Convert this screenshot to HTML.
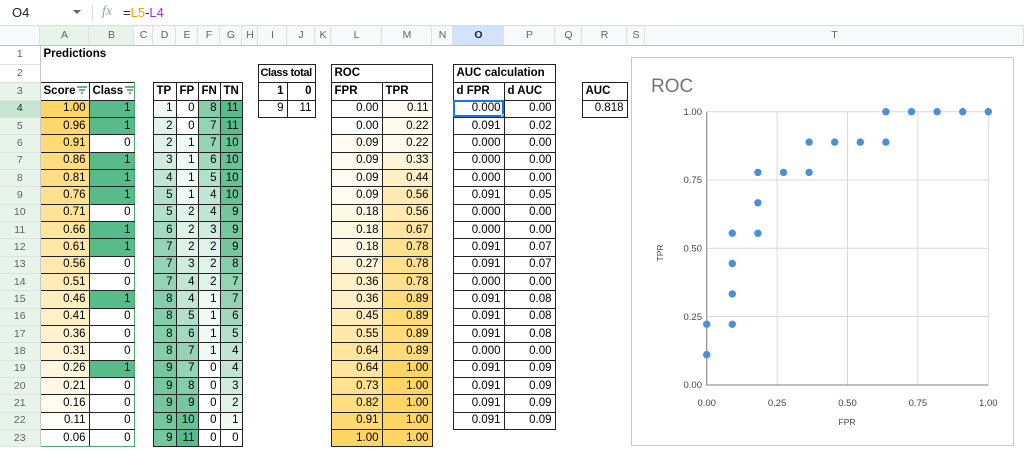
<!DOCTYPE html>
<html><head><meta charset="utf-8">
<style>
*{box-sizing:border-box}
body{margin:0;width:1024px;height:451px;overflow:hidden;background:#fff;font-family:"Liberation Sans",Arial,sans-serif;position:relative}
#bar{position:absolute;left:0;top:0;width:1024px;height:26px;border-bottom:1px solid #dadce0;font-size:13px;color:#202124}
table{position:absolute;left:0;top:26px;width:1024px;border-collapse:collapse;table-layout:fixed;font-size:11.5px;color:#000}
td,th{padding:0 3px;white-space:nowrap;overflow:hidden;height:17.35px;line-height:15px}
th{font-weight:normal;color:#5f6368;font-size:10.5px;text-align:center;padding:0}
thead th{background:#f8f9fa;height:19px;border-bottom:1px solid #c0c0c0;box-shadow:inset -1px 0 #e0e0e0}
tbody th{background:#fff;border-right:1px solid #c8c8c8;border-bottom:1px solid #e0e0e0}
tbody th.gr{background:#e6f4ea}
td.d{border:1px solid #222;text-align:right}
.r{text-align:right}.b{font-weight:bold}
.g0{background:#fff}.g1{background:#f0f9f4}.g2{background:#e0f3ea}.g3{background:#d1ecdf}.g4{background:#c2e6d4}.g5{background:#b3e0ca}.g6{background:#a3dabf}.g7{background:#94d4b5}.g8{background:#85ceaa}.g9{background:#76c79f}.g10{background:#66c195}.g11{background:#57bb8a}
td.fb{border-right:1px solid #4ea86e}
tr.last td.fa,tr.last td.fb{border-bottom:1px solid #4ea86e}
.fi{display:inline-block;vertical-align:middle;margin-left:2px}
</style></head><body>
<div id="bar">
<span style="position:absolute;left:12px;top:5px">O4</span>
<span style="position:absolute;left:73px;top:10px;width:0;height:0;border-left:4px solid transparent;border-right:4px solid transparent;border-top:4px solid #5f6368"></span>
<span style="position:absolute;left:92px;top:5px;width:1px;height:16px;background:#dadce0"></span>
<span style="position:absolute;left:102px;top:4px;font-style:italic;color:#9aa0a6;font-family:'Liberation Serif',serif;font-size:14px">fx</span>
<span style="position:absolute;left:123px;top:5px">=<span style="color:#e8a317">L5</span>-<span style="color:#9334e6">L4</span></span>
</div>
<table>
<colgroup><col style="width:40px"><col style="width:49px"><col style="width:45px"><col style="width:19px"><col style="width:23px"><col style="width:22px"><col style="width:22px"><col style="width:22px"><col style="width:16px"><col style="width:29px"><col style="width:28px"><col style="width:16px"><col style="width:51px"><col style="width:50px"><col style="width:21px"><col style="width:51px"><col style="width:51px"><col style="width:27px"><col style="width:45px"><col style="width:18px"><col style="width:379px"></colgroup>
<thead><tr><th></th><th style="background:#e6f4ea">A</th><th style="background:#e6f4ea">B</th><th>C</th><th>D</th><th>E</th><th>F</th><th>G</th><th>H</th><th>I</th><th>J</th><th>K</th><th>L</th><th>M</th><th>N</th><th style="background:#d3e3fd;color:#1f1f1f;font-weight:bold">O</th><th>P</th><th>Q</th><th>R</th><th>S</th><th>T</th></tr></thead>
<tbody>
<tr style="height:19px"><th style="height:19px">1</th><td class="b" colspan="3" style="height:19px">Predictions</td><td colspan="17"></td></tr>
<tr style="height:18px"><th style="height:18px">2</th><td colspan="8" style="height:18px"></td><td class="d b" colspan="2" style="text-align:left;padding-left:2px;font-size:11px;letter-spacing:-0.4px">Class total</td><td></td><td class="d b" colspan="2" style="text-align:left">ROC</td><td></td><td class="d b" colspan="2" style="text-align:left">AUC calculation</td><td colspan="4"></td></tr>
<tr style="height:18px"><th class="gr" style="height:18px">3</th><td class="d b fa" style="text-align:left">Score<svg class="fi" width="10" height="8"><path d="M0 1h10M2 4h6M4 7h2" stroke="#188038" stroke-width="1.2"/></svg></td><td class="d b fb" style="text-align:left">Class<svg class="fi" width="10" height="8"><path d="M0 1h10M2 4h6M4 7h2" stroke="#188038" stroke-width="1.2"/></svg></td><td></td><td class="d b" style="text-align:left">TP</td><td class="d b" style="text-align:left">FP</td><td class="d b" style="text-align:left">FN</td><td class="d b" style="text-align:left">TN</td><td></td><td class="d b">1</td><td class="d b">0</td><td></td><td class="d b" style="text-align:left">FPR</td><td class="d b" style="text-align:left">TPR</td><td></td><td class="d b" style="text-align:left">d FPR</td><td class="d b" style="text-align:left">d AUC</td><td></td><td class="d b" style="text-align:left">AUC</td><td colspan="2"></td></tr>
<tr><th class="gr" style="background:#c6e6d1;color:#202124">4</th><td class="d fa" style="background:#ffd666">1.00</td><td class="d fb g11">1</td><td></td><td class="d g1">1</td><td class="d g0">0</td><td class="d g8">8</td><td class="d g11">11</td><td></td><td class="d">9</td><td class="d">11</td><td></td><td class="d">0.00</td><td class="d" style="background:#fffbf3">0.11</td><td></td><td class="d" style="outline:2px solid #1a73e8;outline-offset:-2px;position:relative">0.000<span style="position:absolute;right:-4px;bottom:-4px;width:7px;height:7px;border-radius:50%;background:#1a73e8;border:1px solid #fff"></span></td><td class="d">0.00</td><td></td><td class="d">0.818</td><td colspan="2"></td></tr>
<tr><th class="gr">5</th><td class="d fa" style="background:#ffd86d">0.96</td><td class="d fb g11">1</td><td></td><td class="d g2">2</td><td class="d g0">0</td><td class="d g7">7</td><td class="d g11">11</td><td colspan="4"></td><td class="d">0.00</td><td class="d" style="background:#fffaec">0.22</td><td></td><td class="d">0.091</td><td class="d">0.02</td><td colspan="4"></td></tr>
<tr><th class="gr">6</th><td class="d fa" style="background:#ffda75">0.91</td><td class="d fb">0</td><td></td><td class="d g2">2</td><td class="d g1">1</td><td class="d g7">7</td><td class="d g10">10</td><td colspan="4"></td><td class="d" style="background:#fffbf1">0.09</td><td class="d" style="background:#fffaec">0.22</td><td></td><td class="d">0.000</td><td class="d">0.00</td><td colspan="4"></td></tr>
<tr><th class="gr">7</th><td class="d fa" style="background:#ffdc7d">0.86</td><td class="d fb g11">1</td><td></td><td class="d g3">3</td><td class="d g1">1</td><td class="d g6">6</td><td class="d g10">10</td><td colspan="4"></td><td class="d" style="background:#fffbf1">0.09</td><td class="d" style="background:#fff5d9">0.33</td><td></td><td class="d">0.000</td><td class="d">0.00</td><td colspan="4"></td></tr>
<tr><th class="gr">8</th><td class="d fa" style="background:#ffde85">0.81</td><td class="d fb g11">1</td><td></td><td class="d g4">4</td><td class="d g1">1</td><td class="d g5">5</td><td class="d g10">10</td><td colspan="4"></td><td class="d" style="background:#fffbf1">0.09</td><td class="d" style="background:#fff0c6">0.44</td><td></td><td class="d">0.000</td><td class="d">0.00</td><td colspan="4"></td></tr>
<tr><th class="gr">9</th><td class="d fa" style="background:#ffe08d">0.76</td><td class="d fb g11">1</td><td></td><td class="d g5">5</td><td class="d g1">1</td><td class="d g4">4</td><td class="d g10">10</td><td colspan="4"></td><td class="d" style="background:#fffbf1">0.09</td><td class="d" style="background:#ffeab2">0.56</td><td></td><td class="d">0.091</td><td class="d">0.05</td><td colspan="4"></td></tr>
<tr><th class="gr">10</th><td class="d fa" style="background:#ffe395">0.71</td><td class="d fb">0</td><td></td><td class="d g5">5</td><td class="d g2">2</td><td class="d g4">4</td><td class="d g9">9</td><td colspan="4"></td><td class="d" style="background:#fff8e3">0.18</td><td class="d" style="background:#ffeab2">0.56</td><td></td><td class="d">0.000</td><td class="d">0.00</td><td colspan="4"></td></tr>
<tr><th class="gr">11</th><td class="d fa" style="background:#ffe59d">0.66</td><td class="d fb g11">1</td><td></td><td class="d g6">6</td><td class="d g2">2</td><td class="d g3">3</td><td class="d g9">9</td><td colspan="4"></td><td class="d" style="background:#fff8e3">0.18</td><td class="d" style="background:#ffe59f">0.67</td><td></td><td class="d">0.000</td><td class="d">0.00</td><td colspan="4"></td></tr>
<tr><th class="gr">12</th><td class="d fa" style="background:#ffe7a5">0.61</td><td class="d fb g11">1</td><td></td><td class="d g7">7</td><td class="d g2">2</td><td class="d g2">2</td><td class="d g9">9</td><td colspan="4"></td><td class="d" style="background:#fff8e3">0.18</td><td class="d" style="background:#ffe08c">0.78</td><td></td><td class="d">0.091</td><td class="d">0.07</td><td colspan="4"></td></tr>
<tr><th class="gr">13</th><td class="d fa" style="background:#ffe9ae">0.56</td><td class="d fb">0</td><td></td><td class="d g7">7</td><td class="d g3">3</td><td class="d g2">2</td><td class="d g8">8</td><td colspan="4"></td><td class="d" style="background:#fff4d6">0.27</td><td class="d" style="background:#ffe08c">0.78</td><td></td><td class="d">0.091</td><td class="d">0.07</td><td colspan="4"></td></tr>
<tr><th class="gr">14</th><td class="d fa" style="background:#ffebb6">0.51</td><td class="d fb">0</td><td></td><td class="d g7">7</td><td class="d g4">4</td><td class="d g2">2</td><td class="d g7">7</td><td colspan="4"></td><td class="d" style="background:#fff0c8">0.36</td><td class="d" style="background:#ffe08c">0.78</td><td></td><td class="d">0.000</td><td class="d">0.00</td><td colspan="4"></td></tr>
<tr><th class="gr">15</th><td class="d fa" style="background:#ffeebe">0.46</td><td class="d fb g11">1</td><td></td><td class="d g8">8</td><td class="d g4">4</td><td class="d g1">1</td><td class="d g7">7</td><td colspan="4"></td><td class="d" style="background:#fff0c8">0.36</td><td class="d" style="background:#ffdb79">0.89</td><td></td><td class="d">0.091</td><td class="d">0.08</td><td colspan="4"></td></tr>
<tr><th class="gr">16</th><td class="d fa" style="background:#fff0c6">0.41</td><td class="d fb">0</td><td></td><td class="d g8">8</td><td class="d g5">5</td><td class="d g1">1</td><td class="d g6">6</td><td colspan="4"></td><td class="d" style="background:#ffedba">0.45</td><td class="d" style="background:#ffdb79">0.89</td><td></td><td class="d">0.091</td><td class="d">0.08</td><td colspan="4"></td></tr>
<tr><th class="gr">17</th><td class="d fa" style="background:#fff2ce">0.36</td><td class="d fb">0</td><td></td><td class="d g8">8</td><td class="d g6">6</td><td class="d g1">1</td><td class="d g5">5</td><td colspan="4"></td><td class="d" style="background:#ffe8ab">0.55</td><td class="d" style="background:#ffdb79">0.89</td><td></td><td class="d">0.091</td><td class="d">0.08</td><td colspan="4"></td></tr>
<tr><th class="gr">18</th><td class="d fa" style="background:#fff4d6">0.31</td><td class="d fb">0</td><td></td><td class="d g8">8</td><td class="d g7">7</td><td class="d g1">1</td><td class="d g4">4</td><td colspan="4"></td><td class="d" style="background:#ffe59d">0.64</td><td class="d" style="background:#ffdb79">0.89</td><td></td><td class="d">0.000</td><td class="d">0.00</td><td colspan="4"></td></tr>
<tr><th class="gr">19</th><td class="d fa" style="background:#fff6de">0.26</td><td class="d fb g11">1</td><td></td><td class="d g9">9</td><td class="d g7">7</td><td class="d g0">0</td><td class="d g4">4</td><td colspan="4"></td><td class="d" style="background:#ffe59d">0.64</td><td class="d" style="background:#ffd666">1.00</td><td></td><td class="d">0.091</td><td class="d">0.09</td><td colspan="4"></td></tr>
<tr><th class="gr">20</th><td class="d fa" style="background:#fff8e7">0.21</td><td class="d fb">0</td><td></td><td class="d g9">9</td><td class="d g8">8</td><td class="d g0">0</td><td class="d g3">3</td><td colspan="4"></td><td class="d" style="background:#ffe18f">0.73</td><td class="d" style="background:#ffd666">1.00</td><td></td><td class="d">0.091</td><td class="d">0.09</td><td colspan="4"></td></tr>
<tr><th class="gr">21</th><td class="d fa" style="background:#fffbef">0.16</td><td class="d fb">0</td><td></td><td class="d g9">9</td><td class="d g9">9</td><td class="d g0">0</td><td class="d g2">2</td><td colspan="4"></td><td class="d" style="background:#ffdd82">0.82</td><td class="d" style="background:#ffd666">1.00</td><td></td><td class="d">0.091</td><td class="d">0.09</td><td colspan="4"></td></tr>
<tr><th class="gr">22</th><td class="d fa" style="background:#fffdf7">0.11</td><td class="d fb">0</td><td></td><td class="d g9">9</td><td class="d g10">10</td><td class="d g0">0</td><td class="d g1">1</td><td colspan="4"></td><td class="d" style="background:#ffda74">0.91</td><td class="d" style="background:#ffd666">1.00</td><td></td><td class="d">0.091</td><td class="d">0.09</td><td colspan="4"></td></tr>
<tr class="last"><th class="gr">23</th><td class="d fa">0.06</td><td class="d fb">0</td><td></td><td class="d g9">9</td><td class="d g11">11</td><td class="d g0">0</td><td class="d g0">0</td><td colspan="4"></td><td class="d" style="background:#ffd666">1.00</td><td class="d" style="background:#ffd666">1.00</td><td colspan="7"></td></tr>
</tbody></table>
<svg style="position:absolute;left:631px;top:57px" width="383" height="389" font-family="Liberation Sans, Arial, sans-serif">
<rect x="0.5" y="0.5" width="382" height="388" fill="#fff" stroke="#c8c8c8"/>
<text x="20" y="35" font-size="19" fill="#757575">ROC</text>
<g stroke="#d9d9d9" stroke-width="1">
<path d="M146.1 54.7V328M216.5 54.7V328M286.9 54.7V328M357.3 54.7V328M75.7 54.7H357.3M75.7 122.9H357.3M75.7 191.2H357.3M75.7 259.5H357.3"/>
</g>
<path d="M75.7 54.7V328H357.3" stroke="#999" stroke-width="1.3" fill="none"/>
<g font-size="9.5" fill="#444" text-anchor="end">
<text x="71" y="58">1.00</text><text x="71" y="126">0.75</text><text x="71" y="194.5">0.50</text><text x="71" y="263">0.25</text><text x="71" y="331">0.00</text>
</g>
<g font-size="9.5" fill="#444" text-anchor="middle">
<text x="75.7" y="349">0.00</text><text x="146.1" y="349">0.25</text><text x="216.5" y="349">0.50</text><text x="286.9" y="349">0.75</text><text x="357.3" y="349">1.00</text>
<text x="216" y="368" font-size="8.5">FPR</text>
<text transform="translate(32,196) rotate(-90)" font-size="8.5">TPR</text>
</g>
<g fill="#4a90d9">
<circle cx="75.7" cy="297.6" r="3.7"/><circle cx="75.7" cy="267.3" r="3.7"/><circle cx="101.3" cy="267.3" r="3.7"/><circle cx="101.3" cy="236.9" r="3.7"/><circle cx="101.3" cy="206.5" r="3.7"/><circle cx="101.3" cy="176.2" r="3.7"/><circle cx="126.9" cy="176.2" r="3.7"/><circle cx="126.9" cy="145.8" r="3.7"/><circle cx="126.9" cy="115.4" r="3.7"/><circle cx="152.5" cy="115.4" r="3.7"/><circle cx="178.1" cy="115.4" r="3.7"/><circle cx="178.1" cy="85.1" r="3.7"/><circle cx="203.7" cy="85.1" r="3.7"/><circle cx="229.3" cy="85.1" r="3.7"/><circle cx="254.9" cy="85.1" r="3.7"/><circle cx="254.9" cy="54.7" r="3.7"/><circle cx="280.5" cy="54.7" r="3.7"/><circle cx="306.1" cy="54.7" r="3.7"/><circle cx="331.7" cy="54.7" r="3.7"/><circle cx="357.3" cy="54.7" r="3.7"/>
</g>
</svg>
</body></html>
